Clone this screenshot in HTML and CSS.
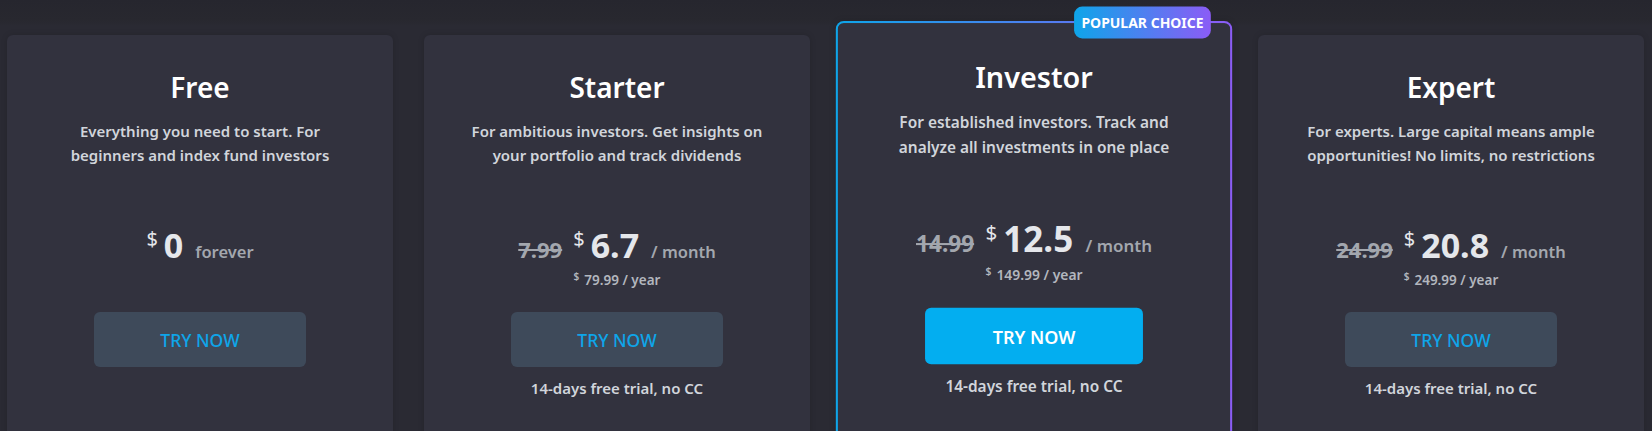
FILE: index.html
```html
<!DOCTYPE html>
<html lang="en">
<head>
<meta charset="utf-8">
<title>Pricing</title>
<link rel="stylesheet" href="styles.css">
</head>
<body>
<main class="plans">
  <section class="card">
    <h2 class="title">Free</h2>
    <p class="desc">Everything you need to start. For beginners and index fund investors</p>
    <div class="price">
      <div class="price-row"><span class="cur">$</span><span class="amount">0</span><span class="period">forever</span></div>
    </div>
    <a class="btn">TRY NOW</a>
  </section>
  <section class="card">
    <h2 class="title">Starter</h2>
    <p class="desc">For ambitious investors. Get insights on your portfolio and track dividends</p>
    <div class="price">
      <div class="price-row"><span class="old">7.99</span><span class="cur">$</span><span class="amount">6.7</span><span class="period">/ month</span></div>
      <div class="year"><span class="ycur">$</span>79.99 / year</div>
    </div>
    <a class="btn">TRY NOW</a>
    <p class="trial">14-days free trial, no CC</p>
  </section>
  <section class="card featured">
    <span class="badge">POPULAR CHOICE</span>
    <h2 class="title">Investor</h2>
    <p class="desc">For established investors. Track and analyze all investments in one place</p>
    <div class="price">
      <div class="price-row"><span class="old">14.99</span><span class="cur">$</span><span class="amount">12.5</span><span class="period">/ month</span></div>
      <div class="year"><span class="ycur">$</span>149.99 / year</div>
    </div>
    <a class="btn btn-primary">TRY NOW</a>
    <p class="trial">14-days free trial, no CC</p>
  </section>
  <section class="card">
    <h2 class="title">Expert</h2>
    <p class="desc">For experts. Large capital means ample opportunities! No limits, no restrictions</p>
    <div class="price">
      <div class="price-row"><span class="old">24.99</span><span class="cur">$</span><span class="amount">20.8</span><span class="period">/ month</span></div>
      <div class="year"><span class="ycur">$</span>249.99 / year</div>
    </div>
    <a class="btn">TRY NOW</a>
    <p class="trial">14-days free trial, no CC</p>
  </section>
</main>
</body>
</html>
```

FILE: styles.css
```css
html, body {
  margin: 0;
  padding: 0;
  height: 100%;
  overflow: hidden;
}
body {
  background: linear-gradient(#26262e 0, #28282f 20px, #2a2a33 26px) #2a2a33;
  font-family: "Noto Sans", "Open Sans", sans-serif;
  color: #d1d5db;
}
.plans {
  display: grid;
  grid-template-columns: repeat(4, 386px);
  column-gap: 31px;
  padding: 35px 8px 0 7px;
}
.card {
  position: relative;
  box-sizing: border-box;
  min-height: 440px;
  background: #32323e;
  border-radius: 6px;
  padding: 33px 38px 0;
  display: flex;
  flex-direction: column;
  align-items: center;
  text-align: center;
  box-shadow: 0 0 6px rgba(0, 0, 0, 0.15);
}
.featured {
  border: 2px solid transparent;
  border-radius: 8px;
  background:
    linear-gradient(#32323e, #32323e) padding-box,
    linear-gradient(90deg, #0ea5e9, #8b5cf6) border-box;
  transform: translateY(-14px) scale(1.028);
  transform-origin: top center;
}
.badge {
  position: absolute;
  top: -16px;
  right: 19px;
  height: 31px;
  line-height: 31px;
  padding: 0 7px;
  border-radius: 8px;
  background: linear-gradient(90deg, #0ea5e9, #8b5cf6);
  color: #fff;
  font-size: 13.6px;
  font-weight: 700;
}
.title {
  margin: 0;
  font-size: 28px;
  line-height: 38px;
  font-weight: 600;
  color: #fff;
}
.desc {
  margin: 13px 0 0;
  font-size: 15px;
  line-height: 24px;
  font-weight: 600;
  color: #d1d5db;
}
.price {
  margin-top: 58px;
  height: 87px;
}
.price-row {
  height: 40px;
  line-height: 40px;
  white-space: nowrap;
}
.old {
  font-size: 22px;
  font-weight: 700;
  color: #a3a7ae;
  text-decoration: line-through;
  margin-right: 11px;
}
.cur {
  font-size: 20px;
  font-weight: 400;
  color: #e5e7eb;
  vertical-align: 12px;
  line-height: 1;
  margin-right: 6px;
}
.amount {
  font-size: 34px;
  font-weight: 700;
  color: #e5e7eb;
}
.period {
  font-size: 16.5px;
  font-weight: 600;
  color: #a3a7ae;
  margin-left: 12px;
}
.year {
  margin-top: 5px;
  font-size: 13.5px;
  line-height: 20px;
  font-weight: 600;
  color: #b3b7be;
}
.ycur {
  font-size: 10px;
  vertical-align: 5px;
  line-height: 1;
  margin-right: 5px;
}
.btn {
  display: flex;
  align-items: center;
  justify-content: center;
  width: 212px;
  height: 55px;
  border-radius: 6px;
  background: #3e4a5a;
  color: #0ea5e9;
  font-size: 17.5px;
  font-weight: 500;
  text-decoration: none;
}
.btn-primary {
  background: #03aef0;
  color: #fff;
  font-weight: 600;
}
.trial {
  margin: 10px 0 0;
  font-size: 15px;
  line-height: 22px;
  font-weight: 600;
  color: #d1d5db;
}
```
